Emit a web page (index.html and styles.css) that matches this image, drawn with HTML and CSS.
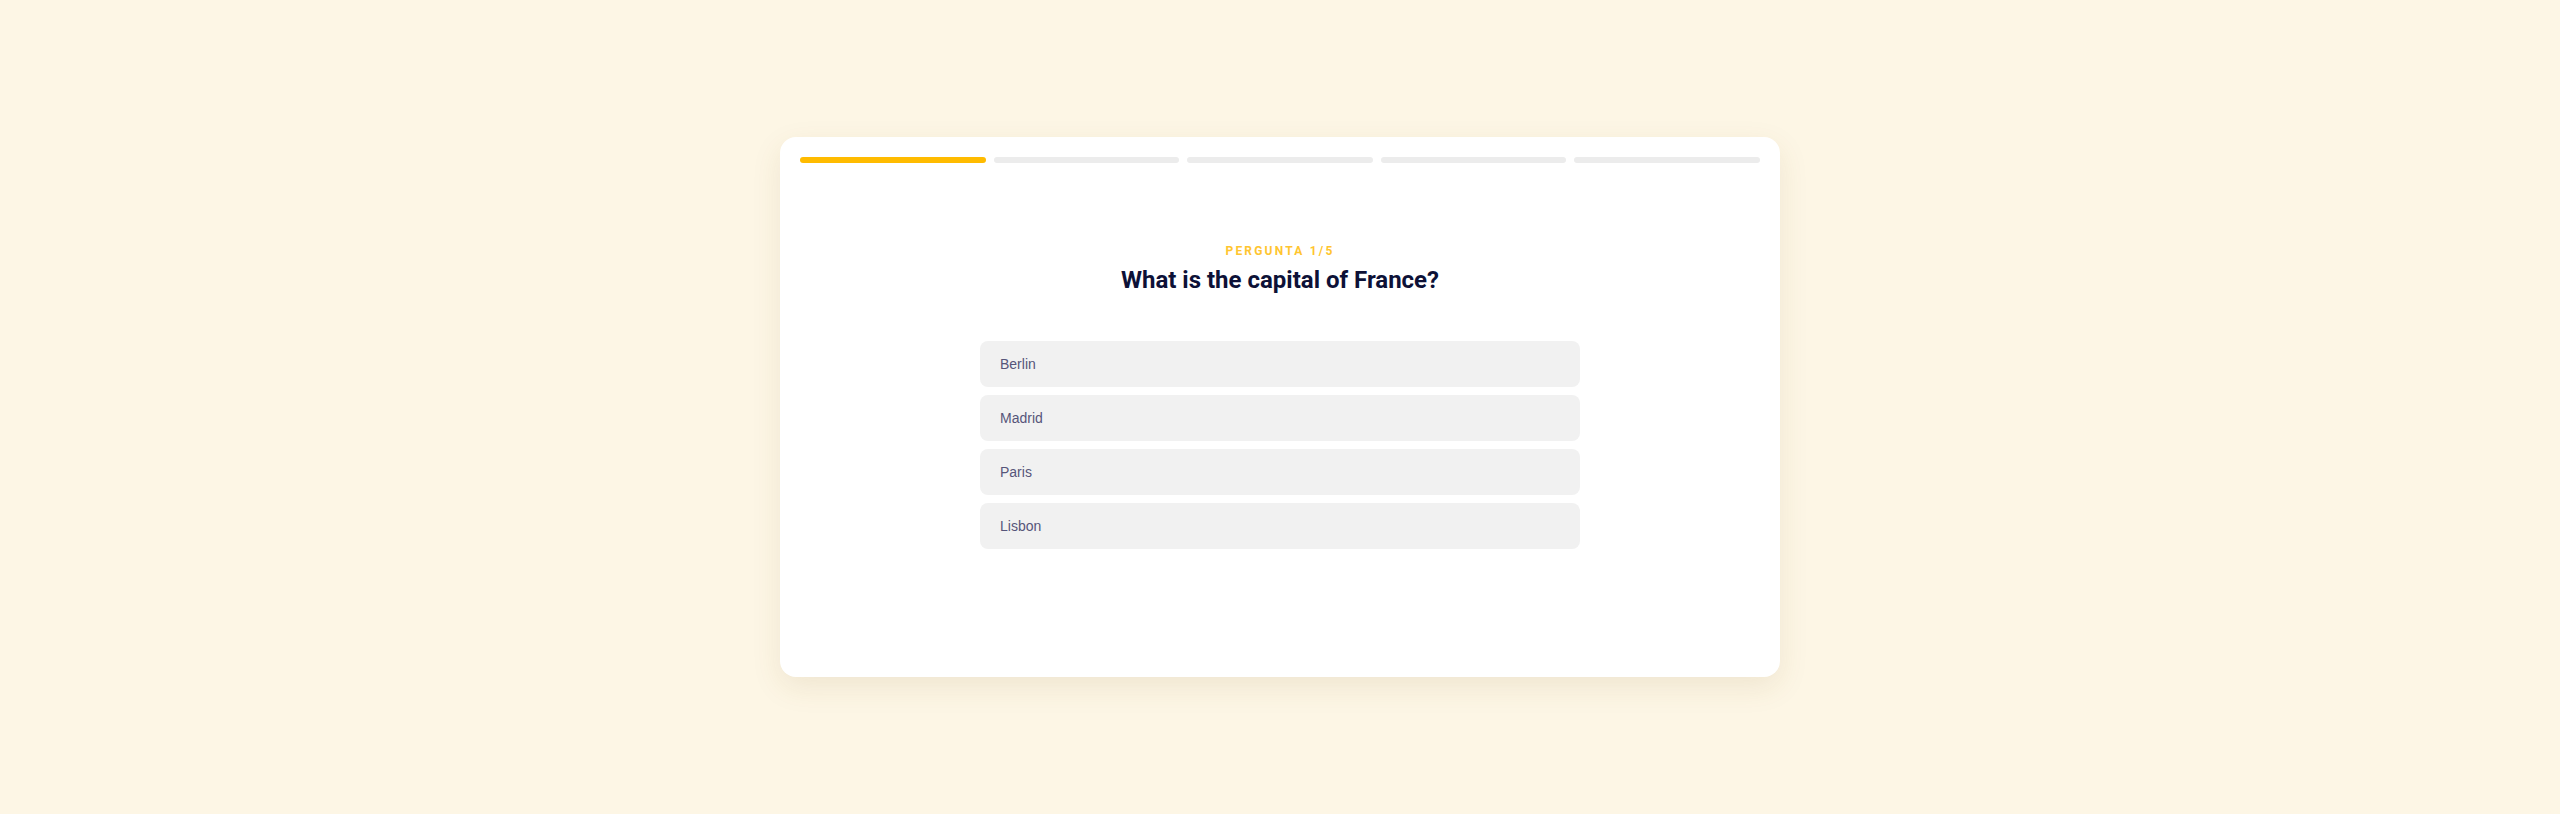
FILE: index.html
```html
<!DOCTYPE html>
<html lang="pt">
<head>
<meta charset="utf-8">
<title>Quiz</title>
<link rel="stylesheet" href="styles.css">
</head>
<body>
<main class="stage">
  <section class="card">
    <div class="progress">
      <span class="seg active"></span>
      <span class="seg"></span>
      <span class="seg"></span>
      <span class="seg"></span>
      <span class="seg"></span>
    </div>
    <div class="question">
      <div class="label">Pergunta 1/5</div>
      <h1 class="title">What is the capital of France?</h1>
    </div>
    <ul class="options">
      <li class="option">Berlin</li>
      <li class="option">Madrid</li>
      <li class="option">Paris</li>
      <li class="option">Lisbon</li>
    </ul>
  </section>
</main>
</body>
</html>
```

FILE: styles.css
```css
* { box-sizing: border-box; }
html, body { margin: 0; padding: 0; }
body {
  background: #fdf6e5;
  font-family: Roboto, "Liberation Sans", Arial, sans-serif;
  width: 2560px;
  height: 814px;
  overflow: hidden;
}
.stage {
  display: flex;
  justify-content: center;
  padding-top: 137px;
}
.card {
  width: 1000px;
  height: 540px;
  background: #ffffff;
  border-radius: 16px;
  box-shadow: 0 10px 30px rgba(120, 90, 30, 0.10);
  padding: 20px;
}
.progress {
  display: flex;
  gap: 8px;
}
.seg {
  flex: 1;
  height: 6px;
  border-radius: 3px;
  background: #ececec;
}
.seg.active { background: #ffbb00; }
.question {
  text-align: center;
  margin-top: 80px;
}
.label {
  font-size: 12px;
  line-height: 16px;
  font-weight: 700;
  letter-spacing: 2.2px;
  text-transform: uppercase;
  color: #ffc530;
  margin-bottom: 5px;
}
.title {
  margin: 0;
  font-size: 24px;
  line-height: 32px;
  font-weight: 700;
  color: #0d1137;
}
.options {
  list-style: none;
  margin: 45px auto 0;
  padding: 0;
  width: 600px;
  display: flex;
  flex-direction: column;
  gap: 8px;
}
.option {
  height: 46px;
  display: flex;
  align-items: center;
  padding: 0 20px;
  background: #f1f1f1;
  border-radius: 8px;
  font-family: "Liberation Sans", Arial, sans-serif;
  font-size: 14px;
  color: #56557a;
}
```
